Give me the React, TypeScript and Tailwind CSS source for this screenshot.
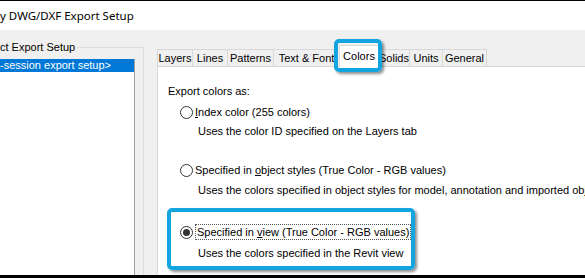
import React from "react";

function Radio({ checked }: { checked?: boolean }) {
  return (
    <span className="w-[13px] h-[13px] rounded-full border border-[#333333] bg-white flex items-center justify-center shrink-0">
      {checked && <span className="w-[7px] h-[7px] rounded-full bg-[#333333]" />}
    </span>
  );
}

const tabs = [
  { label: "Layers", w: "w-[36px]" },
  { label: "Lines", w: "w-[36px]" },
  { label: "Patterns", w: "w-[47px]" },
  { label: "Text & Font", w: "w-[67px]" },
  { label: "Colors", w: "w-[40px]", active: true },
  { label: "Solids", w: "w-[32px]" },
  { label: "Units", w: "w-[34px]" },
  { label: "General", w: "w-[45px]" },
];

export default function App() {
  return (
    <div
      className="w-[585px] h-[278px] overflow-hidden flex flex-col bg-[#f0f0f0] text-black"
      style={{ fontFamily: '"Liberation Sans", Arial, sans-serif' }}
    >
      <div className="h-px bg-black shrink-0" />
      {/* title bar */}
      <div className="h-[29px] bg-white shrink-0 flex items-center">
        <span className="text-[11.5px] leading-none" style={{ fontFamily: '"Noto Sans", sans-serif' }}>
          y DWG/DXF Export Setup
        </span>
      </div>

      <div className="flex-1 flex min-h-0">
        {/* left side */}
        <div className="w-[157px] shrink-0 pt-[17px] flex flex-col">
          <div className="w-[144px] flex-1 border-t border-r border-[#dcdcdc] flex flex-col">
            <span className="-mt-[8px] text-[11px] leading-[14px] bg-[#f0f0f0] self-start pr-[2px]">
              ct Export Setup
            </span>
            <div className="mt-[5px] w-[135px] flex-1 bg-white border-r border-[#a0a0a0]">
              <div className="h-[13px] bg-[#0078d7] text-white text-[11px] leading-[13px] whitespace-nowrap">
                -session export setup&gt;
              </div>
            </div>
          </div>
        </div>

        {/* tabs + panel */}
        <div className="flex-1 flex flex-col pt-[15px]">
          <div className="flex items-end h-[21px] relative z-10">
            {tabs.map((t) =>
              t.active ? (
                <div
                  key={t.label}
                  className={`${t.w} h-[22px] -mb-px -ml-px bg-white border border-b-0 border-[#d9d9d9] relative flex items-center justify-center text-[11px] whitespace-nowrap`}
                >
                  {t.label}
                  <div className="absolute -left-[6px] -right-[4px] -top-[7px] -bottom-[5px] border-4 border-[#12a5df] rounded-[5px] shadow-[2px_2px_3px_rgba(0,0,0,0.45)]" />
                </div>
              ) : (
                <div
                  key={t.label}
                  className={`${t.w} h-[17px] bg-[#f0f0f0] border border-b-0 border-[#d9d9d9] -ml-px first:ml-0 flex items-center justify-center text-[11px] whitespace-nowrap`}
                >
                  {t.label}
                </div>
              )
            )}
          </div>
          <div className="flex-1 bg-white border-l border-t border-[#d9d9d9] pl-[10px] pt-[17px] text-[11px] leading-[14px] whitespace-nowrap">
            <div>Export colors as:</div>

            <div className="mt-[7px] ml-[12px] flex items-center gap-[2px]">
              <Radio />
              <span>
                <span className="underline">I</span>ndex color (255 colors)
              </span>
            </div>
            <div className="mt-[5px] ml-[30px]">Uses the color ID specified on the Layers tab</div>

            <div className="mt-[25px] ml-[12px] flex items-center gap-[2px]">
              <Radio />
              <span>
                Specified in <span className="underline">o</span>bject styles (True Color - RGB values)
              </span>
            </div>
            <div className="mt-[6px] ml-[30px]">
              Uses the colors specified in object styles for model, annotation and imported objects
            </div>

            <div className="mt-[11px] -ml-[1px] w-[248px] border-4 border-[#12a5df] rounded-[5px] shadow-[2px_2px_3px_rgba(0,0,0,0.45)] pl-[9px] pt-[12px] pb-[6px]">
              <div className="flex items-center gap-[2px]">
                <Radio checked />
                <span className="border border-dotted border-[#555555] px-px">
                  Specified in <span className="underline">v</span>iew (True Color - RGB values)
                </span>
              </div>
              <div className="mt-[6px] ml-[18px]">Uses the colors specified in the Revit view</div>
            </div>
          </div>
        </div>
      </div>
      <div className="h-[3px] bg-black shrink-0" />
    </div>
  );
}
